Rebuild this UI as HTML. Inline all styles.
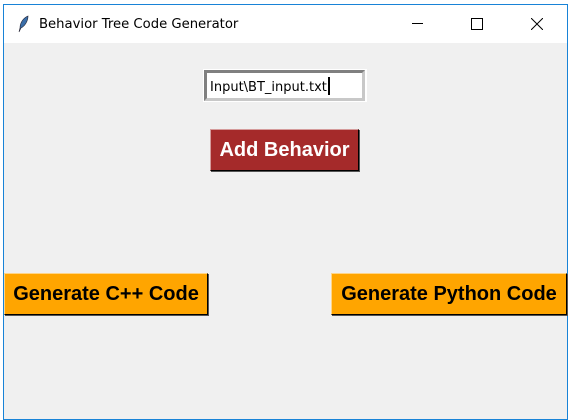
<!DOCTYPE html><html><head><style>
body{margin:0;width:568px;height:420px;background:#fff;position:relative;overflow:hidden;font-family:"Liberation Sans",sans-serif}
.win{position:absolute;left:3px;top:4px;width:563px;height:414px;border:1px solid #1883d7;background:#f0f0f0}
.tb{position:absolute;left:0;top:0;width:563px;height:38px;background:#fff}
.t{position:absolute;left:35px;top:12px;color:#000;font-family:"DejaVu Sans",sans-serif;font-size:13.2px}
.b{position:absolute;font-weight:bold;font-size:20px;text-align:center;box-sizing:border-box;border:1px solid;border-color:#fff8 #000 #000 #fff8;box-shadow:1px 1px 0 #555;white-space:nowrap}
</style></head><body>
<div class="win">
<div class="tb">
<svg style="position:absolute;left:14px;top:10px" width="12" height="18" viewBox="0 0 12 18"><path d="M10 1 C5 3 2 8 2 13 L1 17 L3 13 C7 11 10 6 10 1Z" fill="#3a6ea8" stroke="#223" stroke-width=".6"/></svg>
<div class="t">Behavior Tree Code Generator</div>
<div style="position:absolute;left:408px;top:18px;width:11px;height:1px;background:#000"></div>
<div style="position:absolute;left:467px;top:13px;width:10px;height:10px;border:1px solid #000"></div>
<svg style="position:absolute;left:527px;top:13px" width="12" height="12"><path d="M0 0L12 12M12 0L0 12" stroke="#000" stroke-width="1"/></svg>
</div>
</div>
<div style="position:absolute;left:203px;top:69px;width:164px;height:33px;background:#fff"></div>
<div style="position:absolute;left:204px;top:70px;border:3px solid;border-color:#808080 #c8c8c8 #c8c8c8 #808080;background:#fff;box-sizing:border-box;width:161px;height:31px"></div>
<div style="position:absolute;left:210px;top:77px;font-size:13px;font-family:'DejaVu Sans',sans-serif;letter-spacing:0px;white-space:nowrap">Input\BT_input.txt<span style="display:inline-block;width:2px;height:18px;background:#000;vertical-align:-4px;margin-left:1px"></span></div>
<div class="b" style="left:210px;top:129px;width:149px;height:42px;background:#a52a2a;color:#fff;line-height:40px">Add Behavior</div>
<div class="b" style="left:4px;top:273px;width:204px;height:42px;background:#ffa500;color:#000;line-height:40px">Generate C++ Code</div>
<div class="b" style="left:331px;top:273px;width:236px;height:42px;background:#ffa500;color:#000;line-height:40px">Generate Python Code</div>
</body></html>
